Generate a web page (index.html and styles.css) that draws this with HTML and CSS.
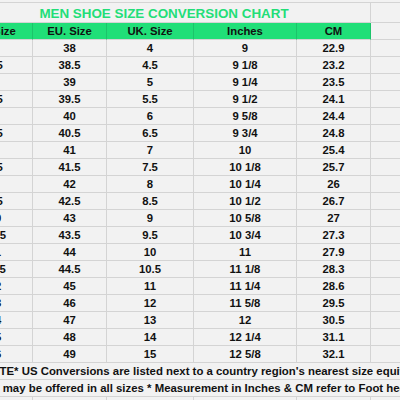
FILE: index.html
```html
<!DOCTYPE html>
<html>
<head>
<meta charset="utf-8">
<link rel="stylesheet" href="styles.css">
</head>
<body>
<div class="sheet">
  <div class="cell title span5">MEN SHOE SIZE CONVERSION CHART</div><div class="cell"></div>
  <div class="cell head">US Size</div><div class="cell head">EU. Size</div><div class="cell head">UK. Size</div><div class="cell head">Inches</div><div class="cell head">CM</div><div class="cell"></div>
  <div class="cell">5</div><div class="cell">38</div><div class="cell">4</div><div class="cell">9</div><div class="cell">22.9</div><div class="cell"></div>
  <div class="cell">5.5</div><div class="cell">38.5</div><div class="cell">4.5</div><div class="cell">9 1/8</div><div class="cell">23.2</div><div class="cell"></div>
  <div class="cell">6</div><div class="cell">39</div><div class="cell">5</div><div class="cell">9 1/4</div><div class="cell">23.5</div><div class="cell"></div>
  <div class="cell">6.5</div><div class="cell">39.5</div><div class="cell">5.5</div><div class="cell">9 1/2</div><div class="cell">24.1</div><div class="cell"></div>
  <div class="cell">7</div><div class="cell">40</div><div class="cell">6</div><div class="cell">9 5/8</div><div class="cell">24.4</div><div class="cell"></div>
  <div class="cell">7.5</div><div class="cell">40.5</div><div class="cell">6.5</div><div class="cell">9 3/4</div><div class="cell">24.8</div><div class="cell"></div>
  <div class="cell">8</div><div class="cell">41</div><div class="cell">7</div><div class="cell">10</div><div class="cell">25.4</div><div class="cell"></div>
  <div class="cell">8.5</div><div class="cell">41.5</div><div class="cell">7.5</div><div class="cell">10 1/8</div><div class="cell">25.7</div><div class="cell"></div>
  <div class="cell">9</div><div class="cell">42</div><div class="cell">8</div><div class="cell">10 1/4</div><div class="cell">26</div><div class="cell"></div>
  <div class="cell">9.5</div><div class="cell">42.5</div><div class="cell">8.5</div><div class="cell">10 1/2</div><div class="cell">26.7</div><div class="cell"></div>
  <div class="cell">10</div><div class="cell">43</div><div class="cell">9</div><div class="cell">10 5/8</div><div class="cell">27</div><div class="cell"></div>
  <div class="cell">10.5</div><div class="cell">43.5</div><div class="cell">9.5</div><div class="cell">10 3/4</div><div class="cell">27.3</div><div class="cell"></div>
  <div class="cell">11</div><div class="cell">44</div><div class="cell">10</div><div class="cell">11</div><div class="cell">27.9</div><div class="cell"></div>
  <div class="cell">11.5</div><div class="cell">44.5</div><div class="cell">10.5</div><div class="cell">11 1/8</div><div class="cell">28.3</div><div class="cell"></div>
  <div class="cell">12</div><div class="cell">45</div><div class="cell">11</div><div class="cell">11 1/4</div><div class="cell">28.6</div><div class="cell"></div>
  <div class="cell">13</div><div class="cell">46</div><div class="cell">12</div><div class="cell">11 5/8</div><div class="cell">29.5</div><div class="cell"></div>
  <div class="cell">14</div><div class="cell">47</div><div class="cell">13</div><div class="cell">12</div><div class="cell">30.5</div><div class="cell"></div>
  <div class="cell">15</div><div class="cell">48</div><div class="cell">14</div><div class="cell">12 1/4</div><div class="cell">31.1</div><div class="cell"></div>
  <div class="cell">16</div><div class="cell">49</div><div class="cell">15</div><div class="cell">12 5/8</div><div class="cell">32.1</div><div class="cell"></div>
  <div class="cell note note1 span6">*NOTE* US Conversions are listed next to a country region's nearest size equivalent.</div>
  <div class="cell note note2 span6">Styles may be offered in all sizes * Measurement in Inches &amp; CM refer to Foot heel to toe length.</div>
  <div class="cell"></div><div class="cell"></div><div class="cell"></div><div class="cell"></div><div class="cell"></div><div class="cell"></div>
</div>
</body>
</html>
```

FILE: styles.css
```css
html, body {
  margin: 0;
  padding: 0;
  overflow: hidden;
  background: #f2f2f2;
}
body {
  width: 400px;
  height: 400px;
  font-family: "Liberation Sans", Arial, sans-serif;
}
.sheet {
  margin-top: 2px;
  margin-left: -42px;
  width: 513px;
  border-top: 1px solid #d4d4d4;
  display: grid;
  grid-template-columns: 75px 74px 87px 103px 74px 100px;
  grid-template-rows: 20px;
  grid-auto-rows: 17px;
  background: #f2f2f2;
}
.cell {
  box-sizing: border-box;
  border-right: 1px solid #d4d4d4;
  border-bottom: 1px solid #d4d4d4;
  display: flex;
  align-items: center;
  justify-content: center;
  font-size: 11.3px;
  font-weight: bold;
  color: #111;
  white-space: nowrap;
  overflow: visible;
}
.span5 { grid-column: span 5; }
.span6 { grid-column: span 6; }
.title {
  color: #22de78;
  font-size: 13.4px;
  padding-top: 1px;
}
.head {
  background: #20df78;
  border-right-color: #1cc46a;
  color: #111;
}
.note {
  justify-content: flex-start;
  font-size: 11.4px;
  border-right: none;
}
.note1 { padding-left: 20px; }
.note2 { padding-left: 8px; }
```
